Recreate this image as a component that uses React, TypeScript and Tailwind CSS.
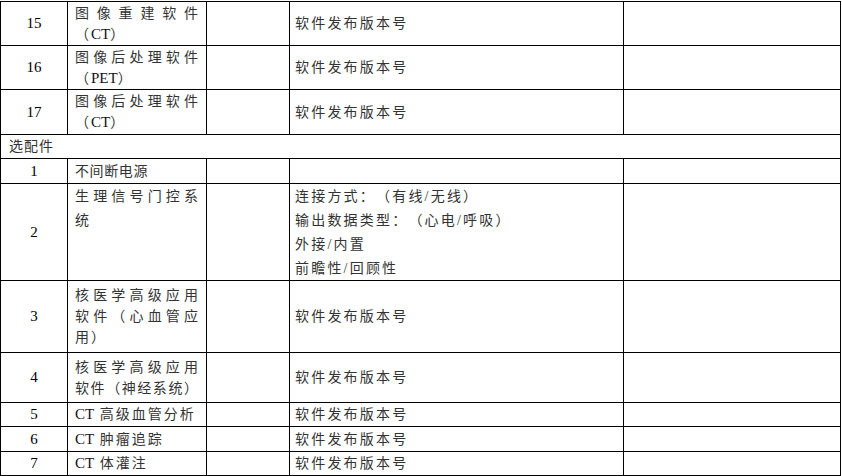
import React from "react";

// Spec table continuation: software items and optional accessories
type Line = { text: string; spread?: boolean; tight?: boolean };

interface Item {
  no: string;
  name: Line[];
  nameTop?: boolean;
  spec: string[];
  specTop?: boolean;
  lead?: string;
}

const cjk = "font-['Liberation_Serif','Noto_Sans_CJK_SC',serif] [text-spacing-trim:space-all]";

const main: Item[] = [
  {
    no: "15",
    name: [{ text: "图像重建软件", spread: true }, { text: "（CT）" }],
    spec: ["软件发布版本号"],
  },
  {
    no: "16",
    name: [{ text: "图像后处理软件", spread: true }, { text: "（PET）" }],
    spec: ["软件发布版本号"],
  },
  {
    no: "17",
    name: [{ text: "图像后处理软件", spread: true }, { text: "（CT）" }],
    spec: ["软件发布版本号"],
  },
];

const optional: Item[] = [
  { no: "1", name: [{ text: "不间断电源", tight: true }], spec: [] },
  {
    no: "2",
    name: [{ text: "生理信号门控系", spread: true }, { text: "统" }],
    nameTop: true,
    spec: ["连接方式：（有线/无线）", "输出数据类型：（心电/呼吸）", "外接/内置", "前瞻性/回顾性"],
    specTop: true,
    lead: "leading-[24px]",
  },
  {
    no: "3",
    name: [
      { text: "核医学高级应用", spread: true },
      { text: "软件（心血管应", spread: true },
      { text: "用）" },
    ],
    spec: ["软件发布版本号"],
  },
  {
    no: "4",
    name: [
      { text: "核医学高级应用", spread: true },
      { text: "软件（神经系统）", spread: true },
    ],
    spec: ["软件发布版本号"],
  },
  { no: "5", name: [{ text: "CT 高级血管分析" }], spec: ["软件发布版本号"] },
  { no: "6", name: [{ text: "CT 肿瘤追踪" }], spec: ["软件发布版本号"] },
  { no: "7", name: [{ text: "CT 体灌注" }], spec: ["软件发布版本号"] },
];

// Latin runs are set a touch larger and without the CJK letter spacing
const Mixed: React.FC<{ text: string }> = ({ text }) => {
  const parts = text.split(/([A-Za-z]+)/).filter(Boolean);
  return (
    <>
      {parts.map((p, i) =>
        /^[A-Za-z]+$/.test(p) ? (
          <span key={i} className="text-[15px] tracking-normal text-[#111]">
            {p}
          </span>
        ) : (
          <span key={i}>{p}</span>
        )
      )}
    </>
  );
};

const NameLine: React.FC<{ line: Line }> = ({ line }) => {
  if (line.spread) {
    return (
      <div className="flex justify-between">
        {Array.from(line.text).map((ch, i) => (
          <span key={i}>{ch}</span>
        ))}
      </div>
    );
  }
  return (
    <div className={`${line.tight ? "tracking-[0.6px]" : "tracking-[2px]"} whitespace-nowrap`}>
      <Mixed text={line.text} />
    </div>
  );
};

const Row: React.FC<{ item: Item }> = ({ item }) => {
  const lead = item.lead || "leading-[21px]";
  return (
    <>
      <div className="bg-white flex items-center justify-center text-[15px] text-black font-['Liberation_Serif',serif]">
        {item.no}
      </div>
      <div
        className={`bg-white flex flex-col pl-[7px] pr-[8px] text-[14px] text-[#333] ${lead} ${
          item.nameTop ? "justify-start pt-[1px]" : "justify-center"
        }`}
      >
        {item.name.map((l, i) => (
          <NameLine key={i} line={l} />
        ))}
      </div>
      <div className="bg-white" />
      <div
        className={`bg-white flex flex-col pl-[5px] text-[14px] text-[#333] tracking-[2.2px] ${lead} ${
          item.specTop ? "justify-start pt-[1px]" : "justify-center"
        }`}
      >
        {item.spec.map((s, i) => (
          <div key={i} className="whitespace-nowrap">
            {s}
          </div>
        ))}
      </div>
      <div className="bg-white" />
    </>
  );
};

export default function App() {
  return (
    <div className={`w-[842px] h-[476px] bg-white pt-px ${cjk}`}>
      <div className="w-[841px] grid grid-cols-[66px_138px_82px_333px_216px] grid-rows-[43px_43px_44px_23px_24px_96px_71px_49px_23px_24px_23px] gap-px p-px bg-black">
        {main.map((it) => (
          <Row key={"m" + it.no} item={it} />
        ))}
        <div className="col-span-5 bg-white flex items-center pl-[8px] text-[14px] text-[#333] tracking-[1px]">
          选配件
        </div>
        {optional.map((it) => (
          <Row key={"o" + it.no} item={it} />
        ))}
      </div>
    </div>
  );
}
